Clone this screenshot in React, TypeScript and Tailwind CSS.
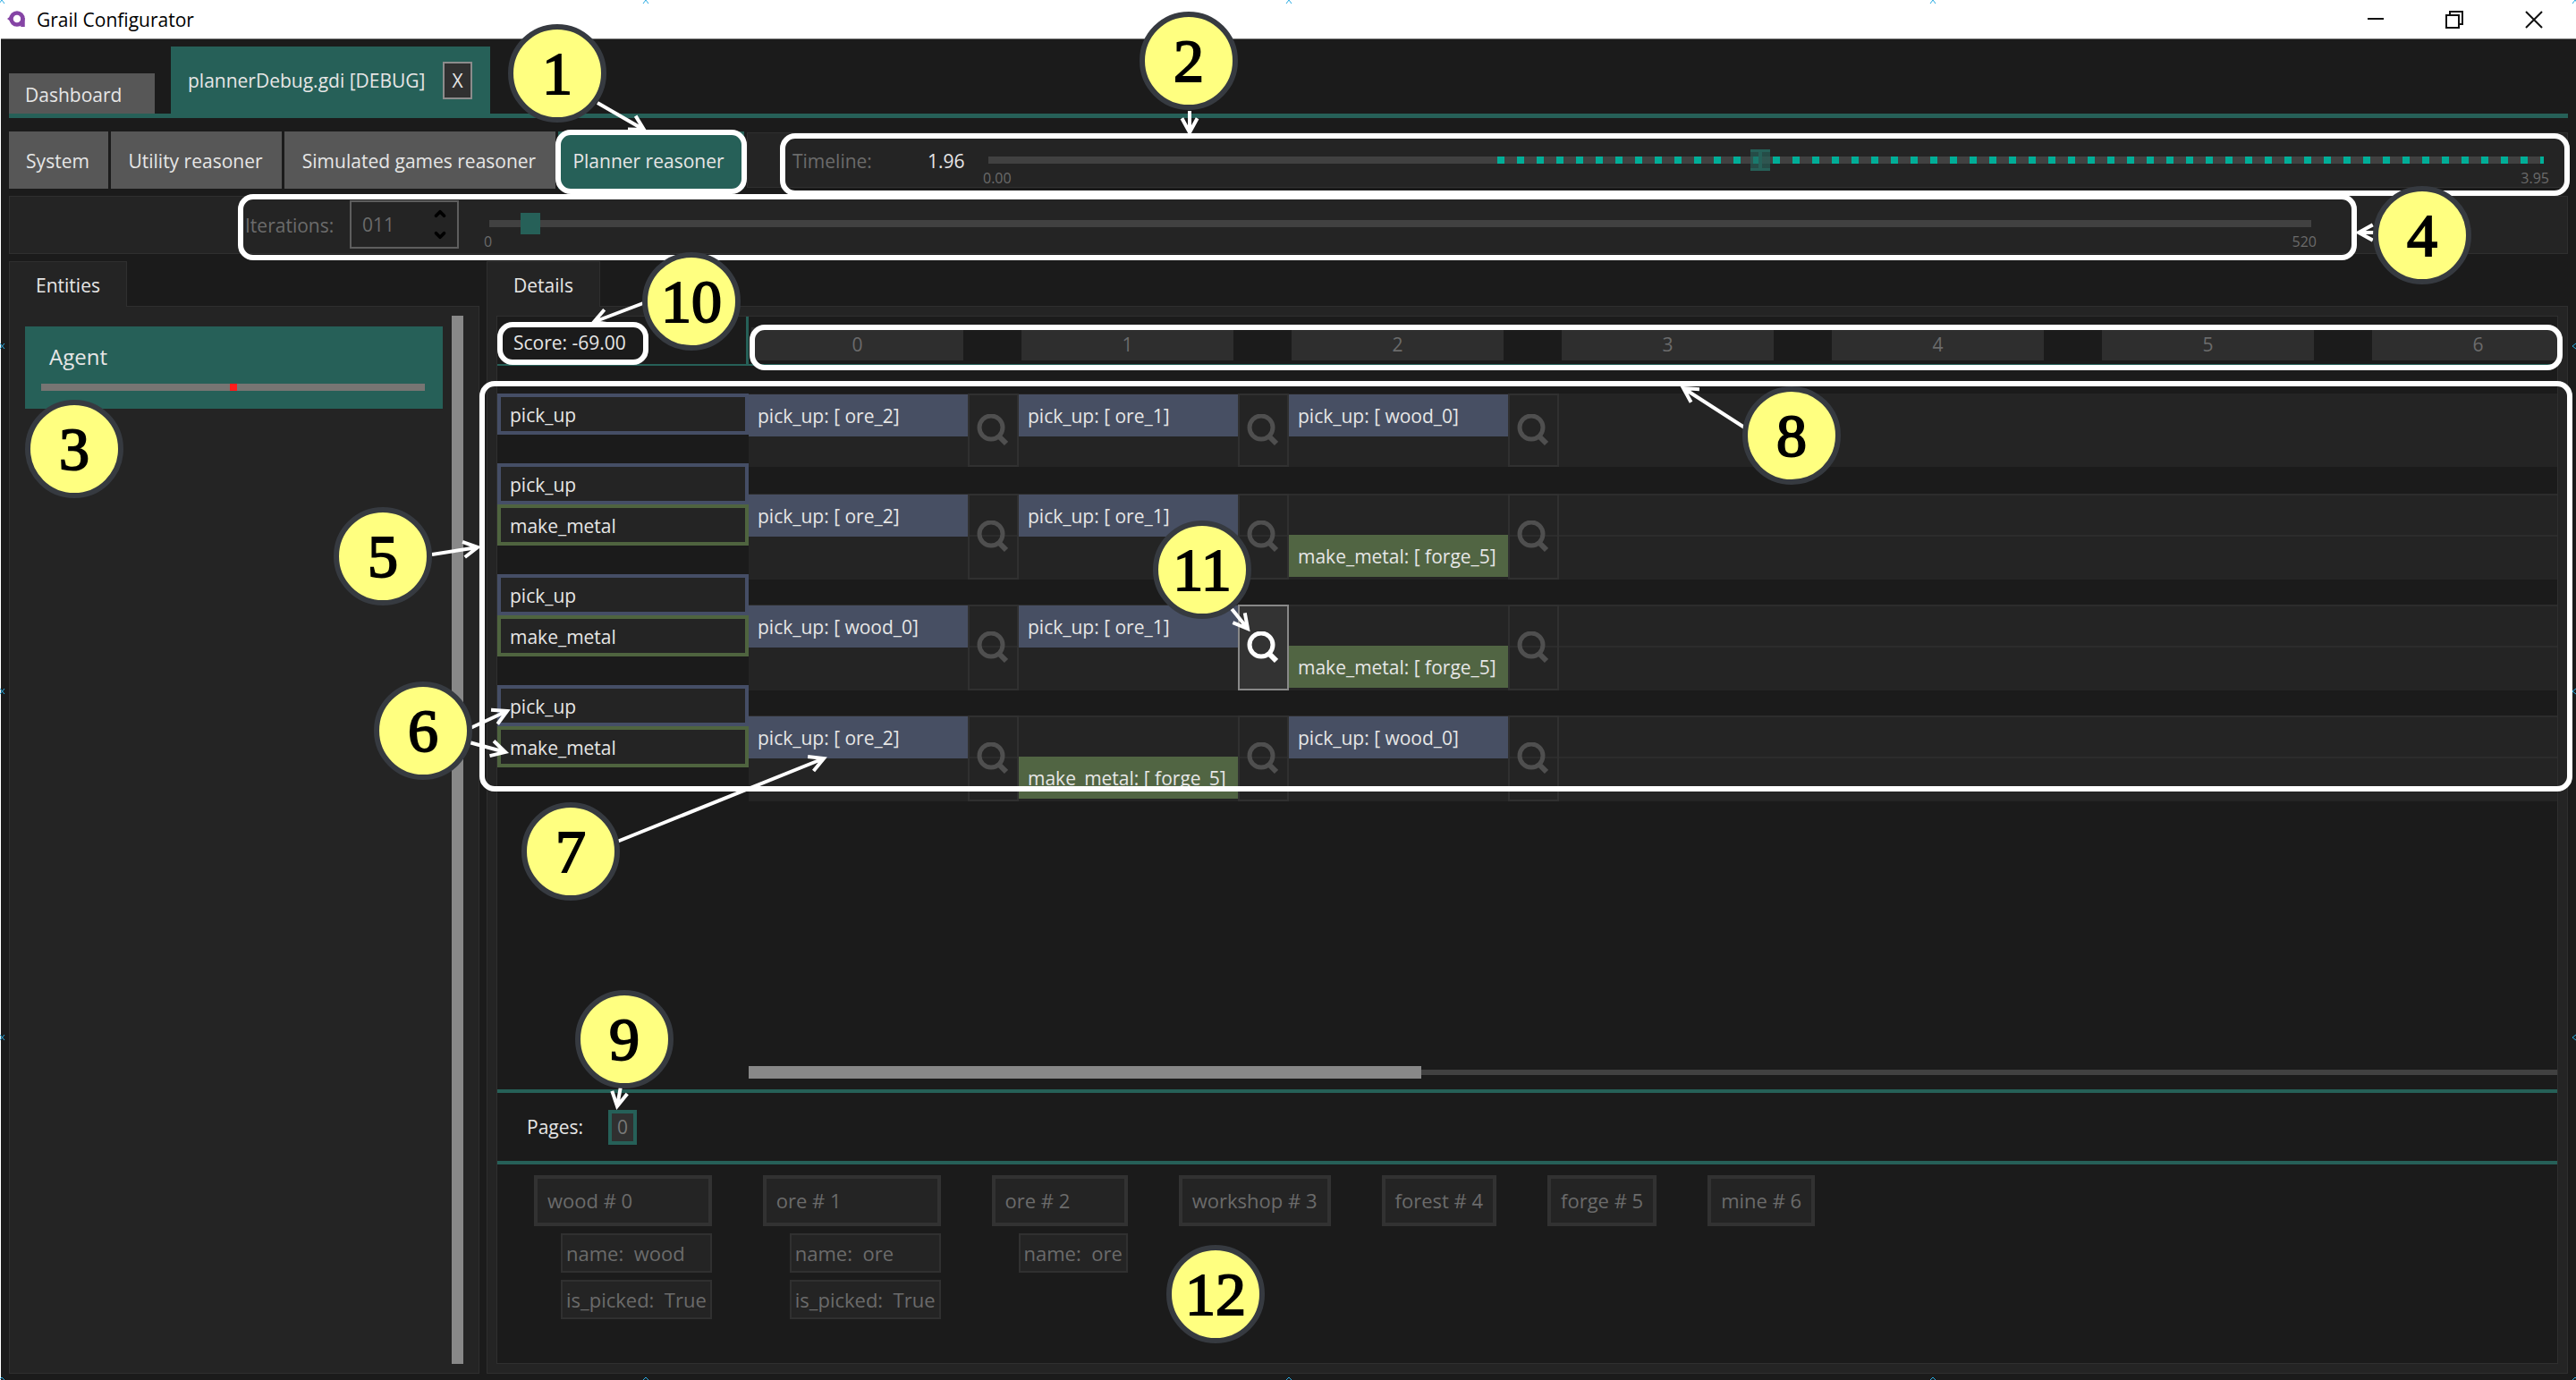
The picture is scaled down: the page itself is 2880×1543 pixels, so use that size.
import { useState } from "react";
import { ChevronDown, ChevronUp } from "lucide-react";

type Kind = "pick" | "make";

type Step = { kind: Kind; target: string };

type PlanRow = {
  tasks: Kind[];
  steps: Step[];
  selected?: number;
};

type Entity = { title: string; props: string[] };

const TASK_NAME: Record<Kind, string> = { pick: "pick_up", make: "make_metal" };

const ROWS: PlanRow[] = [
  {
    tasks: ["pick"],
    steps: [
      { kind: "pick", target: "ore_2" },
      { kind: "pick", target: "ore_1" },
      { kind: "pick", target: "wood_0" },
    ],
  },
  {
    tasks: ["pick", "make"],
    steps: [
      { kind: "pick", target: "ore_2" },
      { kind: "pick", target: "ore_1" },
      { kind: "make", target: "forge_5" },
    ],
  },
  {
    tasks: ["pick", "make"],
    steps: [
      { kind: "pick", target: "wood_0" },
      { kind: "pick", target: "ore_1" },
      { kind: "make", target: "forge_5" },
    ],
    selected: 1,
  },
  {
    tasks: ["pick", "make"],
    steps: [
      { kind: "pick", target: "ore_2" },
      { kind: "make", target: "forge_5" },
      { kind: "pick", target: "wood_0" },
    ],
  },
];

const COLUMNS = [0, 1, 2, 3, 4, 5, 6];

const ENTITIES: Entity[] = [
  { title: "wood # 0", props: ["name:  wood", "is_picked:  True"] },
  { title: "ore # 1", props: ["name:  ore", "is_picked:  True"] },
  { title: "ore # 2", props: ["name:  ore"] },
  { title: "workshop # 3", props: [] },
  { title: "forest # 4", props: [] },
  { title: "forge # 5", props: [] },
  { title: "mine # 6", props: [] },
];

// --- callouts drawn over the window ---
const MARKERS = [
  { n: 1, x: 623, y: 82 },
  { n: 2, x: 1329, y: 68 },
  { n: 3, x: 83, y: 502 },
  { n: 4, x: 2708, y: 263 },
  { n: 5, x: 428, y: 622 },
  { n: 6, x: 473, y: 817 },
  { n: 7, x: 638, y: 952 },
  { n: 8, x: 2003, y: 487 },
  { n: 9, x: 698, y: 1162 },
  { n: 10, x: 773, y: 337 },
  { n: 11, x: 1344, y: 637 },
  { n: 12, x: 1359, y: 1447 },
];

const ARROWS = [
  [668, 115, 720, 145],
  [1330, 124, 1330, 148],
  [2654, 260, 2637, 260],
  [727, 336, 664, 360],
  [483, 620, 534, 612],
  [526, 814, 567, 795],
  [521, 829, 565, 841],
  [690, 941, 921, 848],
  [695, 1209, 690, 1237],
  [1955, 481, 1882, 434],
  [1374, 677, 1395, 703],
];

const FRAMES = [
  { x: 624, y: 148, w: 208, h: 66 },
  { x: 875, y: 152, w: 1995, h: 64 },
  { x: 269, y: 220, w: 2363, h: 68 },
  { x: 559, y: 363, w: 163, h: 42 },
  { x: 841, y: 366, w: 2021, h: 45 },
  { x: 539, y: 429, w: 2334, h: 453 },
];

function arrowPath([x1, y1, x2, y2]: number[]) {
  const angle = Math.atan2(y2 - y1, x2 - x1);
  const arm = (turn: number) =>
    `${x2 - 18 * Math.cos(angle + turn)} ${y2 - 18 * Math.sin(angle + turn)}`;
  return `M${x1} ${y1} L${x2} ${y2} M${arm(0.5)} L${x2} ${y2} L${arm(-0.5)}`;
}

function Callouts() {
  return (
    <div className="pointer-events-none absolute inset-0 overflow-hidden">
      <svg className="absolute left-0 top-0" width="2880" height="1543" fill="none" stroke="#fff">
        {FRAMES.map((f) => (
          <rect key={`${f.x}-${f.y}`} x={f.x} y={f.y} width={f.w} height={f.h} rx="14" strokeWidth="6" />
        ))}
        {ARROWS.map((a) => (
          <path key={a.join("-")} d={arrowPath(a)} strokeWidth="4" />
        ))}
        {/* canvas guide ticks along the edges */}
        <g stroke="#29abe2" strokeWidth="1">
          {[2, 722, 1441, 2161, 2879].map((x) => (
            <path key={x} d={`M${x - 3} 4 L${x} 0 L${x + 3} 4 M${x - 3} 1543 l3 -3 l3 3`} />
          ))}
          {[387, 773, 1160].map((y) => (
            <path key={y} d={`M0 ${y - 3} l5 6 m0 -6 l-5 6 M2880 ${y - 3} l-4 3 l4 3`} />
          ))}
        </g>
      </svg>
      {MARKERS.map((m) => (
        <div
          key={m.n}
          className="absolute flex size-[110px] -translate-x-1/2 -translate-y-1/2 items-center justify-center rounded-full border-6 border-[#363a40] bg-[#ffff80] font-['Liberation_Serif',serif] text-[68px] leading-none text-black [-webkit-text-stroke:2px_#000]"
          style={{ left: m.x, top: m.y }}
        >
          {m.n}
        </div>
      ))}
    </div>
  );
}

function Logo() {
  return (
    <svg className="h-6 w-6" viewBox="0 0 24 24" fill="none">
      <circle cx="12" cy="11" r="6.5" stroke="#8544a5" strokeWidth="4.5" />
      <path d="M18.5 10v10" stroke="#8544a5" strokeWidth="4.5" />
      <path d="M5 8v6l-4-3z" fill="#8544a5" />
    </svg>
  );
}

function TitleBar() {
  return (
    <header className="flex h-[43px] items-center bg-white pl-[6px] text-black">
      <Logo />
      <h1 className="ml-[10px] flex-1">Grail Configurator</h1>
      <button aria-label="Minimize" className="flex w-[88px] justify-center">
        <svg width="20" height="20" stroke="#111" strokeWidth="2"><path d="M1 9h18" /></svg>
      </button>
      <button aria-label="Restore" className="flex w-[88px] justify-center">
        <svg width="20" height="20" fill="none" stroke="#111" strokeWidth="2"><path d="M1 5h14v14h-14zM5 5v-4h14v14h-4" /></svg>
      </button>
      <button aria-label="Close" className="mr-[2px] flex w-[90px] justify-center">
        <svg width="20" height="20" stroke="#111" strokeWidth="2"><path d="M1 1l18 18M19 1l-18 18" /></svg>
      </button>
    </header>
  );
}

function SearchIcon({ active }: { active: boolean }) {
  return (
    <svg width="36" height="36" viewBox="0 0 36 36" fill="none" stroke={active ? "#fff" : "#4f4f4f"}>
      <circle cx="17" cy="15" r="13" strokeWidth="5" />
      <path d="M25 24l9 9" strokeWidth="6" />
    </svg>
  );
}

function TaskLabel({ kind }: { kind: Kind }) {
  return (
    <div
      className={`flex h-[46px] items-center border-4 bg-[#242424] pt-[2px] pl-[10px] ${
        kind === "pick" ? "border-[#454e66]" : "border-[#4f643f]"
      }`}
    >
      {TASK_NAME[kind]}
    </div>
  );
}

function StepCell({ step, tall, active }: { step: Step; tall: boolean; active: boolean }) {
  return (
    <div className={`flex w-[302px] shrink-0 ${tall ? "h-24" : "h-[82px]"}`}>
      <div className={`w-[245px] ${step.kind === "make" ? "pt-[46px]" : "pt-px"}`}>
        <div
          className={`flex h-[47px] items-center pl-[10px] whitespace-pre ${
            step.kind === "pick" ? "bg-[#474f63]" : "bg-[#516543]"
          }`}
        >
          {`${TASK_NAME[step.kind]}: [ ${step.target}]`}
        </div>
      </div>
      <button
        aria-label={`Inspect ${TASK_NAME[step.kind]} ${step.target}`}
        className={`flex w-[57px] items-center justify-center border-2 pr-[3px] ${
          active ? "border-[#888] bg-[#333]" : "border-[#303030]"
        }`}
      >
        <SearchIcon active={active} />
      </button>
    </div>
  );
}

function Plan() {
  return (
    <div className="flex flex-1 overflow-hidden pt-[31px]">
      <div className="w-[281px] shrink-0">
        {ROWS.map((row, i) => (
          <div key={i} className={row.tasks.length > 1 ? "h-[124px]" : "h-[78px]"}>
            {row.tasks.map((t) => (
              <TaskLabel key={t} kind={t} />
            ))}
          </div>
        ))}
      </div>
      <div className="min-w-0 flex-1">
        {ROWS.map((row, i) => {
          const tall = row.tasks.length > 1;
          return (
            <div key={i} className={tall ? "h-[124px]" : "h-[112px]"}>
              <div
                className={`flex overflow-hidden bg-[#242424] ${
                  tall ? "bg-[linear-gradient(#2c2c2c_2px,transparent_2px,transparent_46px,#2c2c2c_46px,#2c2c2c_48px,transparent_48px)]" : ""
                }`}
              >
                {row.steps.map((s, j) => (
                  <StepCell key={j} step={s} tall={tall} active={row.selected === j} />
                ))}
              </div>
            </div>
          );
        })}
      </div>
    </div>
  );
}

function EntityCard({ entity }: { entity: Entity }) {
  return (
    <div>
      <div className="flex h-[57px] items-center border-4 border-[#323232] bg-[#242424] px-[11px] pb-[2px] whitespace-pre">
        {entity.title}
      </div>
      {entity.props.map((p) => (
        <div
          key={p}
          className="mt-2 ml-[30px] flex h-11 items-center border-2 border-[#303030] bg-[#242424] px-1 whitespace-pre"
        >
          {p}
        </div>
      ))}
    </div>
  );
}

const RANGE =
  "col-start-1 row-start-1 h-6 w-full appearance-none bg-transparent [&::-webkit-slider-thumb]:h-6 [&::-webkit-slider-thumb]:w-[22px] [&::-webkit-slider-thumb]:appearance-none";

export default function App() {
  const [time, setTime] = useState(1.96);
  const [position, setPosition] = useState(9);

  return (
    <div className="relative flex min-h-screen flex-col bg-white pl-px font-['Open_Sans','Noto_Sans',sans-serif] text-[21px] leading-7 text-[#e6e6e6]">
      <TitleBar />

      <div className="flex flex-1 flex-col border-t border-[#777] bg-[#1b1b1b] px-[9px] pb-[7px]">
        {/* open documents */}
        <nav className="flex h-[88px] items-end gap-[18px] border-b-5 border-[#266058]">
          <button className="h-[45px] w-[163px] bg-[#575757] pt-[2px] pl-[18px] text-left">Dashboard</button>
          <div className="flex h-[75px] items-center bg-[#266058] pr-5 pl-[19px]">
            <button className="w-[271px] text-left">plannerDebug.gdi [DEBUG]</button>
            <button className="ml-[14px] h-[42px] w-[33px] border-2 border-[#8c8c8c] bg-[#303030]">X</button>
          </div>
        </nav>

        {/* reasoner tabs and timeline */}
        <div className="mt-[15px] flex h-16 gap-[3px]">
          <button className="w-[111px] bg-[#575757] pt-[2px] pr-[2px]">System</button>
          <button className="w-[191px] bg-[#575757] pt-[2px] pr-[2px]">Utility reasoner</button>
          <button className="w-[303px] bg-[#575757] pt-[2px] pr-[2px]">Simulated games reasoner</button>
          <button className="w-[208px] bg-[#266058] pt-[2px] pr-[6px]">Planner reasoner</button>
          <div className="mt-px flex h-[62px] flex-1 items-start border border-[#2f2f2f] bg-[#242424] pr-[26px] pl-[50px]">
            <label htmlFor="timeline" className="mt-[17px] w-[151px] text-[#6b6b6b]">Timeline:</label>
            <output htmlFor="timeline" className="mt-[17px] w-[68px]">{time.toFixed(2)}</output>
            <div className="flex-1 pt-[18px]">
              <div className="grid items-center">
                <div className="col-start-1 row-start-1 flex h-2 bg-[#414141]">
                  <div className="ml-auto w-[67.3%] bg-[repeating-linear-gradient(90deg,#00ae98_0,#00ae98_8px,transparent_8px,transparent_22px)]" />
                </div>
                <input
                  id="timeline"
                  type="range"
                  min="0"
                  max="3.95"
                  step="0.01"
                  value={time}
                  onChange={(e) => setTime(Number(e.target.value))}
                  className={`${RANGE} [&::-webkit-slider-thumb]:border-y-3 [&::-webkit-slider-thumb]:border-[#266058] [&::-webkit-slider-thumb]:bg-[linear-gradient(90deg,#266058aa_9px,#266058_9px,#266058_13px,#266058aa_13px)]`}
                />
              </div>
              <div className="-mx-[6px] flex justify-between text-[16px] leading-4 text-[#6b6b6b]">
                <span>0.00</span>
                <span>3.95</span>
              </div>
            </div>
          </div>
        </div>

        <div className="mt-2 flex h-[65px] items-start border border-[#2f2f2f] bg-[#242424] pr-[286px] pl-[263px] text-[#6b6b6b]">
          <label htmlFor="iterations" className="mt-[18px] w-[117px]">Iterations:</label>
          <div className="mt-1 flex h-[54px] w-[122px] items-center border-2 border-[#5e5e5e] pr-[10px] pl-3">
            <input id="iterations" type="text" defaultValue="011" className="w-0 flex-1 bg-transparent" />
            <div className="flex flex-col gap-[6px] text-black">
              <button aria-label="Increase"><ChevronUp size={18} strokeWidth={5} /></button>
              <button aria-label="Decrease"><ChevronDown size={18} strokeWidth={5} /></button>
            </div>
          </div>
          <div className="ml-[34px] flex-1 pt-[18px]">
            <div className="grid items-center">
              <div className="col-start-1 row-start-1 h-2 bg-[#414141]" />
              <input
                aria-label="Iteration"
                type="range"
                min="0"
                max="520"
                value={position}
                onChange={(e) => setPosition(Number(e.target.value))}
                className={`${RANGE} [&::-webkit-slider-thumb]:bg-[#266058]`}
              />
            </div>
            <div className="-mx-[6px] flex justify-between text-[16px] leading-4">
              <span>0</span>
              <span>520</span>
            </div>
          </div>
        </div>

        <main className="mt-2 flex flex-1 gap-2">
          <section className="flex w-[526px] flex-col">
            <h2 className="relative -mb-px flex h-[51px] w-[132px] items-center justify-center border border-b-0 border-[#2f2f2f] bg-[#242424] pt-[2px]">
              Entities
            </h2>
            <div className="flex flex-1 gap-[10px] border border-[#2f2f2f] bg-[#242424] pt-[10px] pr-[17px] pb-[10px] pl-[17px]">
              <button className="mt-3 h-[92px] flex-1 bg-[#266058] pr-5 pl-[18px] text-left">
                <span className="ml-[9px] block text-[24px]">Agent</span>
                <span className="mt-4 flex h-2 justify-center bg-[#777573]">
                  <span className="w-2 bg-[#ff1c1c]" />
                </span>
              </button>
              <div className="w-[13px] bg-[#888]" />
            </div>
          </section>

          <section className="flex min-w-0 flex-1 flex-col">
            <h2 className="relative -mb-px flex h-[51px] w-[127px] items-center justify-center border border-b-0 border-[#2f2f2f] bg-[#242424] pt-[2px]">
              Details
            </h2>
            <div className="flex flex-1 flex-col border border-[#2f2f2f] bg-[#242424] p-[10px]">
              <div className="flex flex-1 flex-col border border-[#2f2f2f] bg-[#1b1b1b]">
                <div className="flex h-[55px] border-b-2 border-[#266058]">
                  <div className="w-[281px] shrink-0 border-r-3 border-[#266058] pt-[15px] pl-[18px]">Score: -69.00</div>
                  <div className="flex w-0 flex-1 overflow-hidden pt-3">
                    {COLUMNS.map((c) => (
                      <div key={c} className="w-[302px] shrink-0 pl-[3px]">
                        <div className="flex h-[37px] w-[237px] items-center justify-center bg-[#2e2e2e] text-[#6b6b6b]">{c}</div>
                      </div>
                    ))}
                  </div>
                </div>

                <Plan />

                <div className="mb-3 ml-[281px] flex h-[14px] items-center">
                  <div className="h-full w-[752px] bg-[#888]" />
                  <div className="h-[6px] flex-1 bg-[#414141]" />
                </div>

                <div className="flex h-[84px] items-center border-y-4 border-[#266058] pl-[33px]">
                  <span>Pages:</span>
                  <button className="ml-[28px] h-[39px] w-8 border-4 border-[#266058] bg-[#303030] leading-none text-[#787878]">0</button>
                </div>

                <div className="flex h-[222px] gap-[57px] pt-[12px] pl-[41px] text-[22px] text-[#6b6b6b]">
                  {ENTITIES.map((e) => (
                    <EntityCard key={e.title} entity={e} />
                  ))}
                </div>
              </div>
            </div>
          </section>
        </main>
      </div>

      <Callouts />
    </div>
  );
}
